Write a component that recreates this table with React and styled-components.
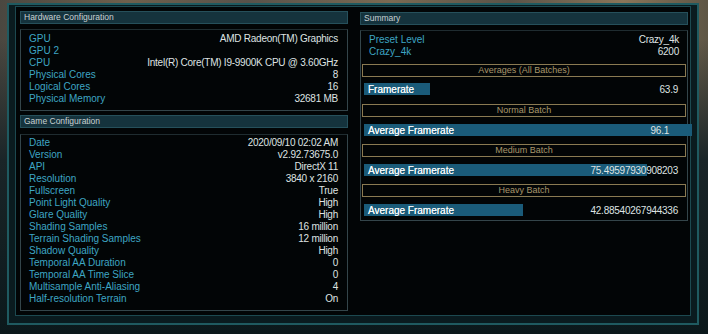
import React from 'react';
import styled, { createGlobalStyle } from 'styled-components';

const GlobalStyle = createGlobalStyle`
  html, body {
    margin: 0;
    padding: 0;
    background: #0b181b;
  }
  body {
    font-family: "Liberation Sans", Arial, sans-serif;
  }
`;

const Screen = styled.div`
  width: 708px;
  height: 334px;
  overflow: hidden;
  box-sizing: border-box;
  padding: 3px 0 0 7px;
  background:
    linear-gradient(to bottom, rgba(11, 24, 27, 0) 0, rgba(11, 24, 27, 0) 40px, #1a2528 160px, #0b181b 100%),
    linear-gradient(90deg, #4a4740 0%, #6f604c 18%, #58524a 35%, #7b6a52 55%, #5a5348 72%, #8a7558 88%, #5e5646 100%);
`;

const Frame = styled.div`
  width: 692px;
  height: 322px;
  box-sizing: border-box;
  border: 2px solid #1f5a60;
  background: #0a1b1f;
  padding: 1px 6px 7px 6px;
`;

const Panel = styled.div`
  height: 100%;
  box-sizing: border-box;
  border: 1px solid #1c4950;
  background: #020506;
  padding: 4px 2px 0 4px;
  display: grid;
  grid-template-columns: 328px 328px;
  column-gap: 12px;
  align-items: start;
`;

const Column = styled.div`
  display: flex;
  flex-direction: column;
`;

const Header = styled.div`
  height: 13px;
  box-sizing: border-box;
  background: #15333d;
  border: 1px solid #26505b;
  color: #c9d1d3;
  font-size: 8.5px;
  line-height: 11px;
  padding-left: 3px;
  margin-top: ${p => p.$top || 0}px;
`;

const Box = styled.div`
  box-sizing: border-box;
  border: 1px solid #34454a;
  border-top-color: #1f2c30;
  margin-top: ${p => p.$top || 5}px;
  padding: ${p => p.$pad || '3px 8px 4px 8px'};
  display: flex;
  flex-direction: column;
`;

const Row = styled.div`
  display: flex;
  justify-content: space-between;
  height: 12px;
  line-height: 12px;
  font-size: 10px;
  white-space: nowrap;
`;

const Label = styled.span`
  color: #3ea6c4;
`;

const Value = styled.span`
  color: #dfe3e3;
  letter-spacing: -0.25px;
`;

const SummaryRows = styled.div`
  padding: 0 7px;
`;

const BatchTitle = styled.div`
  height: 13px;
  box-sizing: border-box;
  border: 1px solid #8a7a52;
  color: #a8966b;
  font-size: 9px;
  line-height: 11px;
  text-align: center;
  margin-top: ${p => p.$top}px;
`;

const BarRow = styled.div`
  position: relative;
  height: 12px;
  margin: ${p => p.$top}px 2px 0 2px;
  display: flex;
  justify-content: space-between;
  align-items: center;
  padding: 0 ${p => p.$valuePad || 6}px 0 4px;
  font-size: 10px;
  white-space: nowrap;
`;

const Fill = styled.div`
  position: absolute;
  left: 0;
  top: 0;
  bottom: 0;
  background: #1a5b79;
`;

const BarLabel = styled.span`
  position: relative;
  color: #f4f7f8;
  text-shadow: 0 0 0.5px #ffffff;
`;

const BarValue = styled.span`
  position: relative;
  color: #dfe3e3;
  letter-spacing: -0.25px;
`;

const hardware = [
  ['GPU', 'AMD Radeon(TM) Graphics'],
  ['GPU 2', ''],
  ['CPU', 'Intel(R) Core(TM) I9-9900K CPU @ 3.60GHz'],
  ['Physical Cores', '8'],
  ['Logical Cores', '16'],
  ['Physical Memory', '32681 MB'],
];

const game = [
  ['Date', '2020/09/10 02:02 AM'],
  ['Version', 'v2.92.73675.0'],
  ['API', 'DirectX 11'],
  ['Resolution', '3840 x 2160'],
  ['Fullscreen', 'True'],
  ['Point Light Quality', 'High'],
  ['Glare Quality', 'High'],
  ['Shading Samples', '16 million'],
  ['Terrain Shading Samples', '12 million'],
  ['Shadow Quality', 'High'],
  ['Temporal AA Duration', '0'],
  ['Temporal AA Time Slice', '0'],
  ['Multisample Anti-Aliasing', '4'],
  ['Half-resolution Terrain', 'On'],
];

const summary = [
  ['Preset Level', 'Crazy_4k'],
  ['Crazy_4k', '6200'],
];

const batches = [
  { title: 'Averages (All Batches)', label: 'Framerate', value: '63.9', bar: 66, top: 6, barTop: 6 },
  { title: 'Normal Batch', label: 'Average Framerate', value: '96.1', bar: 328, pad: 15, top: 9, barTop: 7 },
  { title: 'Medium Batch', label: 'Average Framerate', value: '75.49597930908203', bar: 283, top: 8, barTop: 7 },
  { title: 'Heavy Batch', label: 'Average Framerate', value: '42.88540267944336', bar: 159, top: 8, barTop: 7 },
];

const Rows = ({ items }) =>
  items.map(([k, v]) => (
    <Row key={k}>
      <Label>{k}</Label>
      <Value>{v}</Value>
    </Row>
  ));

export default function App() {
  return (
    <>
      <GlobalStyle />
      <Screen>
        <Frame>
          <Panel>
            <Column>
              <Header>Hardware Configuration</Header>
              <Box $pad="3px 9px 5px 8px">
                <Rows items={hardware} />
              </Box>
              <Header $top={4}>Game Configuration</Header>
              <Box $top={6} $pad="2px 9px 5px 8px">
                <Rows items={game} />
              </Box>
            </Column>
            <Column>
              <Header $top={1}>Summary</Header>
              <Box $top={5} $pad="3px 1px 4px 1px">
                <SummaryRows>
                  <Rows items={summary} />
                </SummaryRows>
                {batches.map(b => (
                  <React.Fragment key={b.title}>
                    <BatchTitle $top={b.top}>{b.title}</BatchTitle>
                    <BarRow $top={b.barTop} $valuePad={b.pad}>
                      <Fill style={{ width: b.bar }} />
                      <BarLabel>{b.label}</BarLabel>
                      <BarValue>{b.value}</BarValue>
                    </BarRow>
                  </React.Fragment>
                ))}
              </Box>
            </Column>
          </Panel>
        </Frame>
      </Screen>
    </>
  );
}
